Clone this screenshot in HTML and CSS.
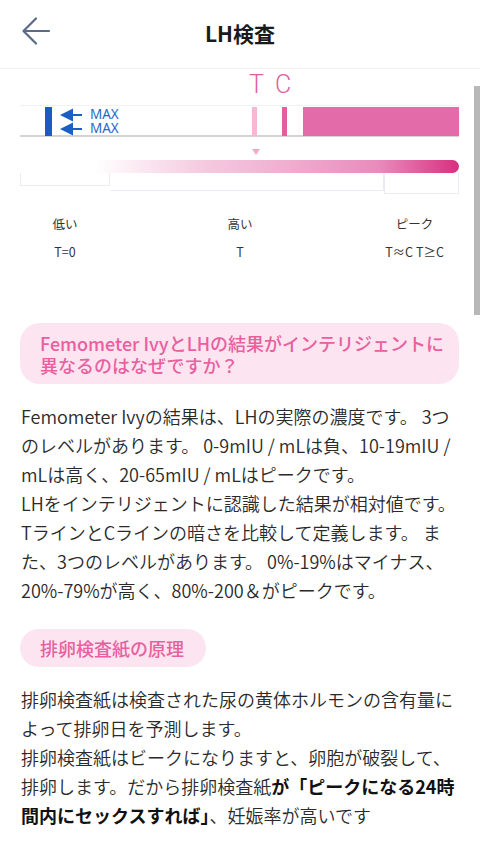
FILE: index.html
```html
<!DOCTYPE html>
<html lang="ja">
<head>
<meta charset="utf-8">
<title>LH検査</title>
<link rel="stylesheet" href="styles.css">
</head>
<body>
<header class="topbar">
  <button class="back" aria-label="戻る">
    <svg width="30" height="30" viewBox="0 0 30 30"><path d="M28 14H3M15 1.5L2.5 14L15 26.5" fill="none" stroke="#5b6a86" stroke-width="2.2" stroke-linecap="round" stroke-linejoin="round"/></svg>
  </button>
  <h1 class="title">LH検査</h1>
</header>

<section class="chart">
  <div class="tc"><span class="tc-t">T</span><span class="tc-c">C</span></div>
  <div class="strip">
    <span class="sp"></span>
    <span class="bluebar"></span>
    <span class="sp"></span>
    <svg class="arrows" width="22" height="29" viewBox="0 0 22 29">
      <path d="M0 8L13 1.5V14.5Z M0 22L13 15.5V28.5Z" fill="#1b5fc3"/>
      <path d="M12 8H22M12 22H22" stroke="#1b5fc3" stroke-width="2"/>
    </svg>
    <span class="sp"></span>
    <span class="max"><span class="max-line">MAX</span><span class="max-line">MAX</span></span>
    <span class="tline"></span>
    <span class="sp"></span>
    <span class="cline"></span>
    <span class="sp"></span>
    <span class="block"></span>
  </div>
  <div class="marker"><span class="tri"></span></div>
  <div class="gradbar"></div>
  <div class="steps"><span class="s1"></span><span class="s2"></span><span class="s3"></span></div>
  <div class="labels">
    <span>低い</span><span>高い</span><span>ピーク</span>
    <span>T=0</span><span>T</span><span>T≈C T≥C</span>
  </div>
</section>

<h2 class="pill wide">Femometer IvyとLHの結果がインテリジェントに異なるのはなぜですか？</h2>
<p class="text">Femometer Ivyの結果は、LHの実際の濃度です。 3つのレベルがあります。 0-9mIU / mLは負、10-19mIU / mLは高く、20-65mIU / mLはピークです。<br>LHをインテリジェントに認識した結果が相対値です。 TラインとCラインの暗さを比較して定義します。 また、3つのレベルがあります。 0%-19%はマイナス、20%-79%が高く、80%-200＆がピークです。</p>

<h2 class="pill">排卵検査紙の原理</h2>
<p class="text">排卵検査紙は検査された尿の黄体ホルモンの含有量によって排卵日を予測します。<br>排卵検査紙はビークになりますと、卵胞が破裂して、排卵します。だから排卵検査紙<strong>が「ピークになる24時間内にセックスすれば」</strong>、妊娠率が高いです</p>

<div class="scrollbar"></div>
</body>
</html>
```

FILE: styles.css
```css
* { box-sizing: border-box; }
html, body { margin: 0; padding: 0; background: #fff; }
body {
  font-family: "Noto Sans CJK JP", "Noto Sans", sans-serif;
  color: #262626;
  width: 480px;
  min-height: 856px;
  overflow: hidden;
}

.topbar {
  height: 69px;
  border-bottom: 1px solid #f1f1f3;
  display: flex;
  align-items: center;
  justify-content: center;
  position: relative;
}
.back {
  position: absolute;
  left: 21px;
  top: 17px;
  width: 32px;
  height: 30px;
  padding: 0;
  border: 0;
  background: none;
  display: flex;
}
.title {
  margin: 0;
  font-size: 21px;
  font-weight: 700;
  color: #1a1a1a;
  line-height: 1;
  padding-bottom: 2px;
}

.chart {
  margin: 0 21px 0 20px;
  width: 439px;
}
.tc {
  height: 36px;
  display: flex;
  font-family: Roboto, "Liberation Sans", sans-serif;
  font-weight: 300;
  font-size: 25px;
  line-height: 31px;
  color: #e2609e;
}
.tc-t { margin-left: 229px; }
.tc-c { margin-left: 11px; }

.strip {
  display: grid;
  grid-template-columns: 25px 7px 8px 22px 8px 162px 5px 25px 5px 16px 156px;
  height: 32px;
  border-top: 1px solid #f1f1f4;
  border-bottom: 2px solid #d3d3d6;
  padding-top: 1px;
}
.bluebar { background: #1a5cbf; }
.arrows { display: block; }
.max {
  display: flex;
  flex-direction: column;
  font-family: "Noto Sans", "Liberation Sans", sans-serif;
  font-size: 13.5px;
  color: #2868c6;
}
.max-line {
  display: block;
  height: 14px;
  line-height: 14px;
}
.tline { background: #f4b8d5; }
.cline { background: #e45e9f; }
.block { background: #e46ba9; }

.marker {
  height: 23px;
  padding-top: 12px;
  padding-left: 232px;
  display: flex;
  align-items: flex-start;
}
.tri {
  width: 0;
  height: 0;
  border-left: 4px solid transparent;
  border-right: 4px solid transparent;
  border-top: 6px solid #f2a9cc;
}
.gradbar {
  margin-left: 75px;
  height: 13px;
  border-radius: 0 7px 7px 0;
  background: linear-gradient(to right, rgba(244,190,218,0) 0%, rgba(243,196,220,0.9) 30%, #f0b2d2 50%, #e88bbc 78%, #d8307f 100%);
}
.steps {
  display: flex;
  align-items: flex-start;
}
.steps span {
  border: 1px solid #eaecf3;
  border-top: 0;
}
.s1 { width: 90px; height: 13px; }
.s2 { width: 274px; height: 18px; border-left: 0 !important; }
.s3 { width: 75px; height: 21px; }

.labels {
  margin-top: 16px;
  display: grid;
  grid-template-columns: 90px 260px 89px;
  grid-auto-rows: 28px;
  align-items: center;
  text-align: center;
  font-size: 12.5px;
  line-height: 28px;
  color: #333;
}

.pill {
  margin: 0 21px 0 20px;
  display: inline-block;
  background: #fce4f0;
  color: #e95f9f;
  font-size: 18px;
  font-weight: 500;
  line-height: 22px;
  border-radius: 20px;
  padding: 8px 22px 8px 20px;
}
.pill.wide {
  display: block;
  margin-top: 57px;
  padding: 9px 10px 8px 20px;
}
.text {
  margin: 18px 20px 24px 21px;
  font-size: 18px;
  font-weight: 350;
  line-height: 29px;
  color: #2a2a2a;
}
.text strong { font-weight: 700; color: #111; }

.scrollbar {
  position: fixed;
  right: 0;
  top: 86px;
  width: 6px;
  height: 229px;
  background: #b8b8b8;
}
```
